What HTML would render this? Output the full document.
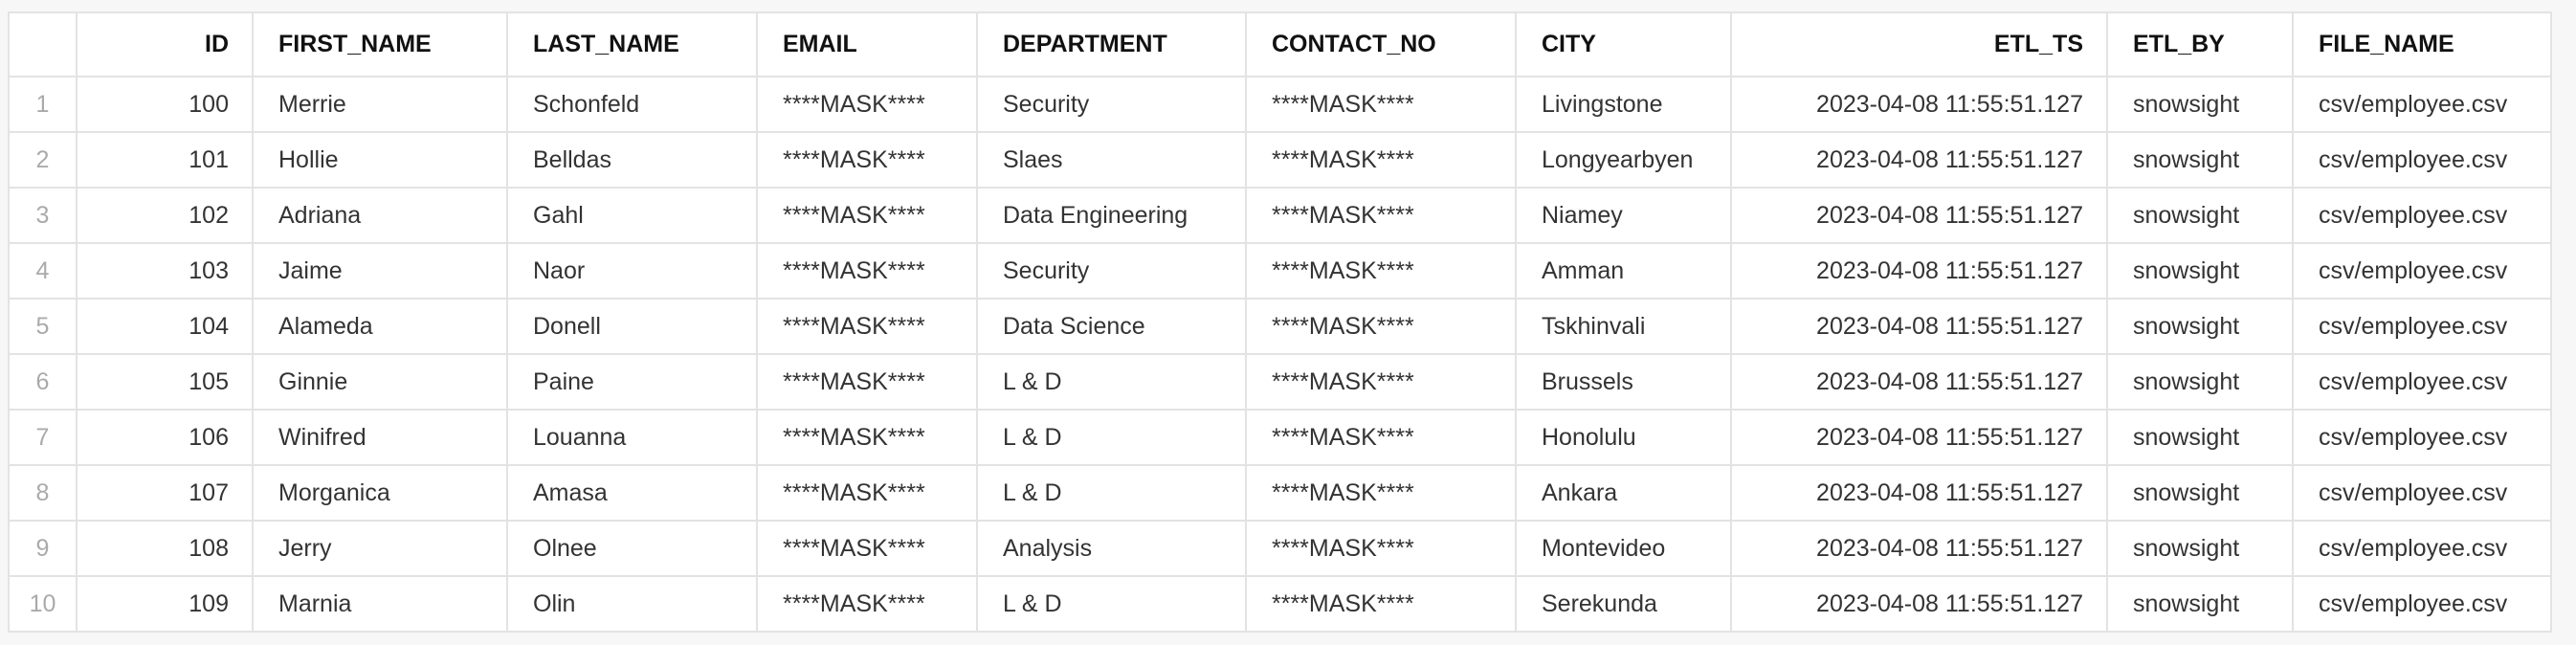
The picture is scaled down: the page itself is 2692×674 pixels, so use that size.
<!DOCTYPE html>
<html><head><meta charset="utf-8"><style>
html,body{margin:0;padding:0;width:2692px;height:674px;background:#f7f7f7;overflow:hidden}
table{position:absolute;left:8px;top:12px;border-collapse:collapse;table-layout:fixed;background:#fff;font-family:"Liberation Sans",sans-serif;font-size:25px;color:#333}
td,th{border:2px solid #e3e3e3;height:56px;padding:0 26px;white-space:nowrap;overflow:hidden;text-align:left}
th{height:65px;font-weight:bold;color:#111}
.r{text-align:right;padding-right:24px}
.n{text-align:center;color:#aaa;padding:0}
</style></head><body>
<table>
<colgroup><col style="width:71px"><col style="width:184px"><col style="width:266px"><col style="width:261px"><col style="width:230px"><col style="width:281px"><col style="width:282px"><col style="width:225px"><col style="width:393px"><col style="width:194px"><col style="width:270px"></colgroup>
<tr><th></th><th class="r">ID</th><th>FIRST_NAME</th><th>LAST_NAME</th><th>EMAIL</th><th>DEPARTMENT</th><th>CONTACT_NO</th><th>CITY</th><th class="r">ETL_TS</th><th>ETL_BY</th><th>FILE_NAME</th></tr>
<tr><td class="n">1</td><td class="r">100</td><td>Merrie</td><td>Schonfeld</td><td>****MASK****</td><td>Security</td><td>****MASK****</td><td>Livingstone</td><td class="r">2023-04-08 11:55:51.127</td><td>snowsight</td><td>csv/employee.csv</td></tr>
<tr><td class="n">2</td><td class="r">101</td><td>Hollie</td><td>Belldas</td><td>****MASK****</td><td>Slaes</td><td>****MASK****</td><td>Longyearbyen</td><td class="r">2023-04-08 11:55:51.127</td><td>snowsight</td><td>csv/employee.csv</td></tr>
<tr><td class="n">3</td><td class="r">102</td><td>Adriana</td><td>Gahl</td><td>****MASK****</td><td>Data Engineering</td><td>****MASK****</td><td>Niamey</td><td class="r">2023-04-08 11:55:51.127</td><td>snowsight</td><td>csv/employee.csv</td></tr>
<tr><td class="n">4</td><td class="r">103</td><td>Jaime</td><td>Naor</td><td>****MASK****</td><td>Security</td><td>****MASK****</td><td>Amman</td><td class="r">2023-04-08 11:55:51.127</td><td>snowsight</td><td>csv/employee.csv</td></tr>
<tr><td class="n">5</td><td class="r">104</td><td>Alameda</td><td>Donell</td><td>****MASK****</td><td>Data Science</td><td>****MASK****</td><td>Tskhinvali</td><td class="r">2023-04-08 11:55:51.127</td><td>snowsight</td><td>csv/employee.csv</td></tr>
<tr><td class="n">6</td><td class="r">105</td><td>Ginnie</td><td>Paine</td><td>****MASK****</td><td>L &amp; D</td><td>****MASK****</td><td>Brussels</td><td class="r">2023-04-08 11:55:51.127</td><td>snowsight</td><td>csv/employee.csv</td></tr>
<tr><td class="n">7</td><td class="r">106</td><td>Winifred</td><td>Louanna</td><td>****MASK****</td><td>L &amp; D</td><td>****MASK****</td><td>Honolulu</td><td class="r">2023-04-08 11:55:51.127</td><td>snowsight</td><td>csv/employee.csv</td></tr>
<tr><td class="n">8</td><td class="r">107</td><td>Morganica</td><td>Amasa</td><td>****MASK****</td><td>L &amp; D</td><td>****MASK****</td><td>Ankara</td><td class="r">2023-04-08 11:55:51.127</td><td>snowsight</td><td>csv/employee.csv</td></tr>
<tr><td class="n">9</td><td class="r">108</td><td>Jerry</td><td>Olnee</td><td>****MASK****</td><td>Analysis</td><td>****MASK****</td><td>Montevideo</td><td class="r">2023-04-08 11:55:51.127</td><td>snowsight</td><td>csv/employee.csv</td></tr>
<tr><td class="n">10</td><td class="r">109</td><td>Marnia</td><td>Olin</td><td>****MASK****</td><td>L &amp; D</td><td>****MASK****</td><td>Serekunda</td><td class="r">2023-04-08 11:55:51.127</td><td>snowsight</td><td>csv/employee.csv</td></tr>
</table>
</body></html>
